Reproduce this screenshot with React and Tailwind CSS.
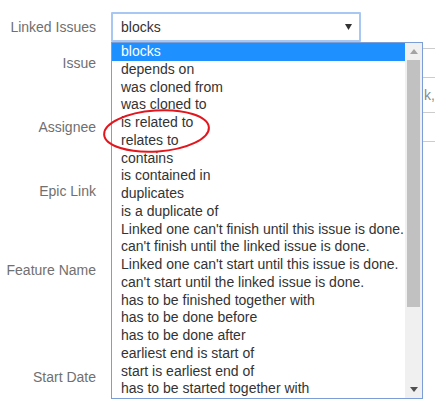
import React from "react";

const options = [
  "blocks",
  "depends on",
  "was cloned from",
  "was cloned to",
  "is related to",
  "relates to",
  "contains",
  "is contained in",
  "duplicates",
  "is a duplicate of",
  "Linked one can't finish until this issue is done.",
  "can't finish until the linked issue is done.",
  "Linked one can't start until this issue is done.",
  "can't start until the linked issue is done.",
  "has to be finished together with",
  "has to be done before",
  "has to be done after",
  "earliest end is start of",
  "start is earliest end of",
  "has to be started together with",
];

function Label({ children }) {
  return (
    <div className="w-[96px] shrink-0 text-right text-[14px] text-[#707070]">
      {children}
    </div>
  );
}

export default function App() {
  return (
    <div
      className="relative w-[435px] h-[401px] overflow-hidden bg-white"
      style={{ fontFamily: '"Liberation Sans", Arial, sans-serif' }}
    >
      <div className="flex flex-col">
        {/* Linked Issues */}
        <div className="mt-[12px] flex h-[30px] items-center gap-[15px]">
          <Label>Linked Issues</Label>
          <div className="flex h-[30px] w-[250px] shrink-0 items-center justify-between rounded-[1px] border-2 border-[#a9c7f3] pl-[8px] pr-[7px] text-[14px] text-[#333]">
            <span>blocks</span>
            <svg width="7" height="6" viewBox="0 0 7 6">
              <path d="M0 0H7L3.5 6Z" fill="#333" />
            </svg>
          </div>
        </div>

        {/* Issue */}
        <div className="mt-[6px] flex h-[30px] items-center gap-[15px]">
          <Label>Issue</Label>
          <div className="h-[30px] w-[400px] shrink-0 border border-[#cccccc]" />
        </div>
        <div className="flex h-[34px] items-center gap-[15px]">
          <div className="w-[96px] shrink-0" />
          <div className="whitespace-nowrap pl-[313px] text-[14px] text-[#8a8a8a]">
            k,
          </div>
        </div>

        {/* Assignee */}
        <div className="flex h-[30px] items-center gap-[15px]">
          <Label>Assignee</Label>
          <div className="h-[30px] w-[400px] shrink-0 border border-[#cccccc]" />
        </div>

        {/* Epic Link */}
        <div className="mt-[34px] flex h-[30px] items-center gap-[15px]">
          <Label>Epic Link</Label>
          <div className="h-[30px] w-[280px] shrink-0 border border-[#cccccc]" />
        </div>

        {/* Feature Name */}
        <div className="mt-[49px] flex h-[30px] items-center gap-[15px]">
          <Label>Feature Name</Label>
          <div className="h-[30px] w-[280px] shrink-0 border border-[#cccccc]" />
        </div>

        {/* Start Date */}
        <div className="mt-[77px] flex h-[30px] items-center gap-[15px]">
          <Label>Start Date</Label>
          <div className="h-[30px] w-[200px] shrink-0 border border-[#cccccc]" />
        </div>
      </div>

      {/* Dropdown list */}
      <div className="absolute left-[111px] top-[42px] flex h-[357px] w-[312px] border border-[#7b9ed6] bg-white">
        <div className="flex-1 overflow-hidden">
          {options.map((o, i) => (
            <div
              key={o}
              className={
                "h-[17.75px] whitespace-nowrap pl-[9px] text-[14px] leading-[17.75px] " +
                (i === 0 ? "bg-[#1e90ff] text-white" : "text-[#333]")
              }
            >
              {o}
            </div>
          ))}
        </div>
        <div className="flex w-[17px] shrink-0 flex-col bg-[#f0f0f0]">
          <div className="flex h-[17px] items-center justify-center">
            <svg width="8" height="5" viewBox="0 0 8 5">
              <path d="M0 5H8L4 0Z" fill="#a3a3a3" />
            </svg>
          </div>
          <div className="mx-[2px] h-[247px] bg-[#c1c1c1]" />
          <div className="flex-1" />
          <div className="flex h-[17px] items-center justify-center">
            <svg width="8" height="5" viewBox="0 0 8 5">
              <path d="M0 0H8L4 5Z" fill="#505050" />
            </svg>
          </div>
        </div>
      </div>

      {/* Red annotation ellipse */}
      <svg
        className="pointer-events-none absolute left-0 top-0"
        width="435"
        height="401"
        viewBox="0 0 435 401"
      >
        <ellipse
          cx="156.5"
          cy="131"
          rx="52.5"
          ry="20.5"
          transform="rotate(-4 156.5 131)"
          fill="none"
          stroke="#e3161e"
          strokeWidth="2"
        />
      </svg>
    </div>
  );
}
